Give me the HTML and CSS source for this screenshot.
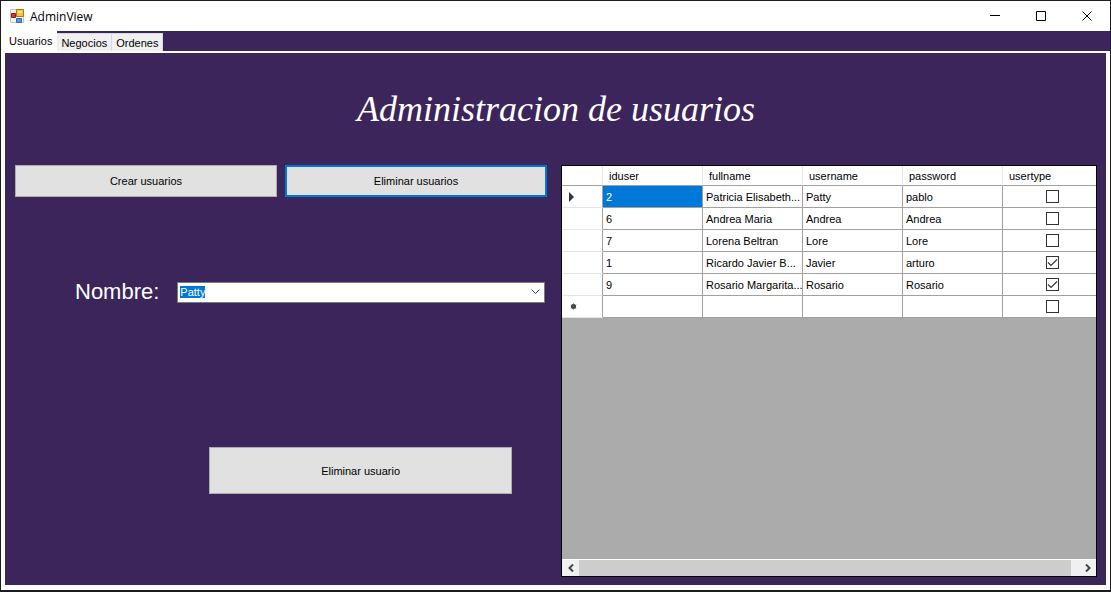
FILE: index.html
```html
<!DOCTYPE html>
<html lang="es">
<head>
<meta charset="utf-8">
<title>AdminView</title>
<link rel="stylesheet" href="styles.css">
</head>
<body>
<div class="window">
  <header class="titlebar">
    <svg class="app-icon" width="14" height="14" viewBox="0 0 14 14" aria-hidden="true">
      <path d="M.5.5h13v13H.5z" fill="#f4f4f4" stroke="#c4c4c8"/>
      <path d="M6.500.500h7v7h-7z" fill="#f4c63c" stroke="#a87b18"/>
      <path d="M8 2h4v2H8z" fill="#ffe690"/>
      <path d="M1.500 4.500h4v4h-4z" fill="#c9392f" stroke="#8f1c1c"/>
      <path d="M6.500 9.500h5v4h-5z" fill="#5b94dc" stroke="#3566b4"/>
    </svg>
    <span class="window-title">AdminView</span>
    <div class="window-controls">
      <button type="button" aria-label="Minimizar"><svg width="11" height="11" viewBox="0 0 11 11"><path d="M0 4.500h10"/></svg></button>
      <button type="button" aria-label="Maximizar"><svg width="11" height="11" viewBox="0 0 11 11"><path d="M.5.5h9v9h-9z"/></svg></button>
      <button type="button" aria-label="Cerrar"><svg width="11" height="11" viewBox="0 0 11 11"><path d="M.5.5l9 9M9.500.500l-9 9"/></svg></button>
    </div>
  </header>

  <nav class="tabs" role="tablist">
    <button class="tab tab-active" type="button" role="tab" aria-selected="true">Usuarios</button>
    <button class="tab" type="button" role="tab" aria-selected="false">Negocios</button>
    <button class="tab" type="button" role="tab" aria-selected="false">Ordenes</button>
  </nav>

  <main class="page">
    <h1 class="heading">Administracion de usuarios</h1>
    <div class="columns">
      <section class="controls">
        <div class="actions">
          <button class="btn" type="button">Crear usuarios</button>
          <button class="btn btn-focus" type="button">Eliminar usuarios</button>
        </div>
        <div class="field">
          <label for="nombre">Nombre:</label>
          <div class="combo">
            <input id="nombre" type="text" value="Patty" autocomplete="off">
            <button type="button" aria-label="Abrir lista"><svg width="9" height="6" viewBox="0 0 9 6"><path d="M.5.5l4 4 4-4"/></svg></button>
          </div>
        </div>
        <button class="btn btn-large" type="button">Eliminar usuario</button>
      </section>

      <section class="datagrid">
        <table>
          <colgroup><col class="col-marker"><col class="col-data"><col class="col-data"><col class="col-data"><col class="col-data"><col></colgroup>
          <thead>
            <tr><th></th><th>iduser</th><th>fullname</th><th>username</th><th>password</th><th>usertype</th></tr>
          </thead>
          <tbody>
            <tr><td class="marker"><svg width="5" height="10" viewBox="0 0 5 10"><path d="M0 0l5 5-5 5z" fill="#333"/></svg></td><td class="selected">2</td><td>Patricia Elisabeth...</td><td>Patty</td><td>pablo</td><td class="check"><input type="checkbox" aria-label="usertype 2"></td></tr>
            <tr><td class="marker"></td><td>6</td><td>Andrea Maria</td><td>Andrea</td><td>Andrea</td><td class="check"><input type="checkbox" aria-label="usertype 6"></td></tr>
            <tr><td class="marker"></td><td>7</td><td>Lorena Beltran</td><td>Lore</td><td>Lore</td><td class="check"><input type="checkbox" aria-label="usertype 7"></td></tr>
            <tr><td class="marker"></td><td>1</td><td>Ricardo Javier B...</td><td>Javier</td><td>arturo</td><td class="check"><input type="checkbox" aria-label="usertype 1" checked></td></tr>
            <tr><td class="marker"></td><td>9</td><td>Rosario Margarita...</td><td>Rosario</td><td>Rosario</td><td class="check"><input type="checkbox" aria-label="usertype 9" checked></td></tr>
            <tr><td class="marker marker-new"><svg width="7" height="7" viewBox="0 0 7 7"><circle cx="3.500" cy="3.500" r="2.500" fill="#333"/><path d="M3.500.500v6M.8 2l5.400 3M6.200 2L.8 5" stroke="#555"/></svg></td><td></td><td></td><td></td><td></td><td class="check"><input type="checkbox" aria-label="usertype nuevo"></td></tr>
          </tbody>
        </table>
        <div class="scrollbar">
          <button type="button" aria-label="Izquierda"><svg width="6" height="8" viewBox="0 0 6 8"><path d="M5 .5L1.500 4 5 7.500"/></svg></button>
          <div class="thumb"></div>
          <button class="scroll-right" type="button" aria-label="Derecha"><svg width="6" height="8" viewBox="0 0 6 8"><path d="M1 .5L4.500 4 1 7.500"/></svg></button>
        </div>
      </section>
    </div>
  </main>
</div>
<script src="app.js"></script>
</body>
</html>
```

FILE: styles.css
```css
* {
  box-sizing: border-box;
}

body {
  margin: 0;
  background: #1c1c1c;
  font-family: "Microsoft Sans Serif", "Liberation Sans", Arial, sans-serif;
  font-size: 11px;
  color: #000;
}

button,
input {
  font: inherit;
  color: inherit;
}

button {
  border: 0;
  padding: 0;
  background: none;
}

svg {
  display: block;
}

.window {
  display: flex;
  flex-direction: column;
  min-height: 100vh;
  border: 1px solid #1c1c1c;
  border-bottom-width: 2px;
  background: #3c255b;
}

.titlebar {
  display: flex;
  align-items: center;
  height: 30px;
  padding-left: 9px;
  background: #fff;
}

.window-title {
  margin-left: 6px;
  font-family: "Segoe UI", "Open Sans", sans-serif;
  font-size: 12px;
}

.window-controls {
  display: flex;
  margin-left: auto;
}

.window-controls button {
  display: grid;
  place-items: center;
  width: 46px;
  height: 30px;
}

.window-controls svg {
  fill: none;
  stroke: #000;
}

.tabs {
  display: flex;
  align-items: flex-end;
  height: 20px;
}

.tab {
  height: 18px;
  padding: 0 4px;
  border: 1px solid #d9d9d9;
  border-width: 1px 1px 0 0;
  background: #f0f0f0;
}

.tab-active {
  height: 20px;
  padding: 0 4px 2px 8px;
  border-color: #fff;
  background: #fff;
}

.page {
  flex: 1;
  display: flex;
  flex-direction: column;
  border: solid #fdfcfe;
  border-width: 2px 4px 5px;
  padding: 0 9px 8px 10px;
}

.heading {
  margin: 0;
  height: 112px;
  color: #fff;
  font-family: "Edwardian Script ITC", "Palace Script MT", "Liberation Serif", serif;
  font-size: 36px;
  font-style: italic;
  font-weight: 400;
  line-height: 112px;
  text-align: center;
}

.columns {
  flex: 1;
  display: grid;
  grid-template-columns: minmax(0, 532fr) minmax(0, 536fr);
  gap: 14px;
}

.controls {
  display: flex;
  flex-direction: column;
}

.actions {
  display: grid;
  grid-template-columns: 1fr 1fr;
  gap: 8px;
}

.btn {
  height: 32px;
  border: 1px solid #adadad;
  background: #e1e1e1;
}

.btn-focus {
  border: 2px solid #0078d7;
}

.btn-large {
  width: 57%;
  height: 47px;
  margin: 140px 0 0 194px;
}

.field {
  display: flex;
  align-items: center;
  gap: 18px;
  height: 30px;
  margin: 80px 2px 0 60px;
}

.field label {
  color: #fff;
  font-family: "Arial Narrow", "Liberation Sans Narrow", "Liberation Sans", sans-serif;
  font-size: 22px;
}

.combo {
  flex: 1;
  display: flex;
  height: 21px;
  border: 1px solid #7a7a7a;
  background: #fff;
}

.combo input {
  flex: 1;
  min-width: 0;
  padding: 0 2px;
  border: 0;
  outline: 0;
  background: none;
}

.combo input::selection {
  background: #0078d7;
  color: #fff;
}

.combo button {
  display: grid;
  place-items: center;
  width: 17px;
}

.combo svg,
.scrollbar svg {
  fill: none;
  stroke: #444;
}

.datagrid {
  display: flex;
  flex-direction: column;
  border: 1px solid #000;
  background: #ababab;
}

table {
  width: 100%;
  table-layout: fixed;
  border-collapse: separate;
  border-spacing: 0;
  background: #fff;
}

.col-marker {
  width: 41px;
}

.col-data {
  width: 100px;
}

th,
td {
  padding: 0 3px;
  border: solid #a0a0a0;
  border-width: 0 1px 1px 0;
  text-align: left;
  font-weight: 400;
  white-space: nowrap;
  overflow: hidden;
}

th {
  height: 20px;
  padding: 0 6px;
  border-right-color: #e5e5e5;
}

td {
  height: 22px;
}

th:last-child,
td:last-child {
  border-right-width: 0;
}

.marker {
  padding-left: 7px;
  border-bottom-color: #e5e5e5;
}

.marker-new {
  padding-left: 8px;
}

.selected {
  background: #0078d7;
  color: #fff;
}

.check {
  padding-left: 9px;
  text-align: center;
}

.check input {
  appearance: none;
  display: block;
  width: 13px;
  height: 13px;
  margin: 0 auto;
  border: 1px solid #333;
  background: #fff;
}

.check input:checked {
  background: url("data:image/svg+xml,%3Csvg xmlns='http://www.w3.org/2000/svg' viewBox='0 0 11 11'%3E%3Cpath d='M1 5.500l3 3 6-6' fill='none' stroke='%23333' stroke-width='1.200'/%3E%3C/svg%3E") center / 11px 11px no-repeat;
}

.scrollbar {
  display: flex;
  height: 17px;
  margin-top: auto;
  border-top: 1px solid #fff;
  background: #f0f0f0;
}

.scrollbar button {
  display: grid;
  place-items: center;
  width: 17px;
}

.scrollbar svg {
  stroke-width: 2;
}

.scrollbar .scroll-right {
  margin-left: 8px;
}

.thumb {
  flex: 1;
  background: #cdcdcd;
}
```

FILE: app.js
```js
const nombre = document.getElementById("nombre");
nombre.focus();
nombre.select();
```
